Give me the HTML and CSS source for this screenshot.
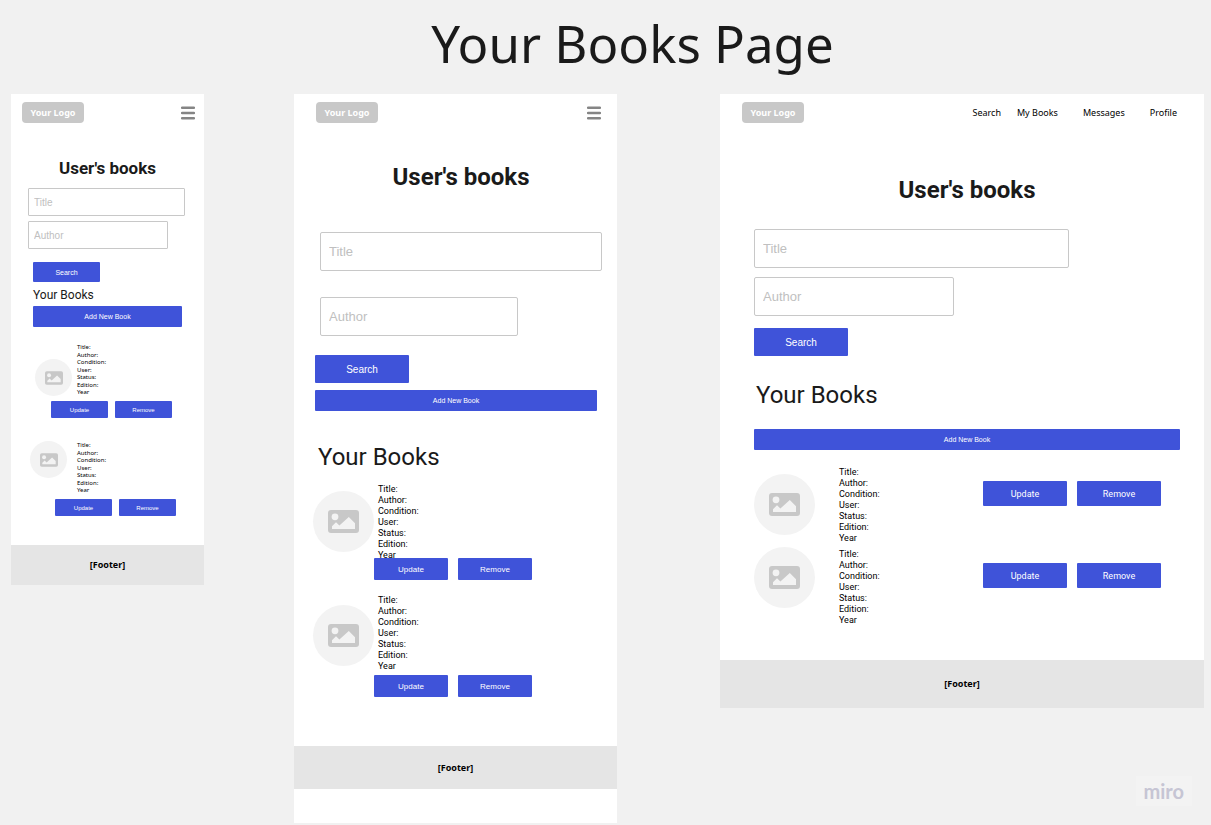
FILE: index.html
```
<!DOCTYPE html>
<html lang="en">
<head>
<meta charset="utf-8">
<meta name="viewport" content="width=device-width, initial-scale=1">
<title>Your Books Page</title>
<link rel="stylesheet" href="styles.css">
</head>
<body>
<svg class="sprite" aria-hidden="true">
  <symbol id="picture" viewBox="0 0 31 23">
    <rect width="31" height="23" rx="3" fill="#c8c8c8"/>
    <circle cx="7" cy="6.8" r="3.4" fill="#f3f3f3"/>
    <path d="M4 19v-2.800l4-4 3.400 3.400L20.800 7 27 13.200V19z" fill="#f3f3f3"/>
  </symbol>
  <symbol id="menu" viewBox="0 0 14 14">
    <path d="M1 1.700h12M1 7h12M1 12.300h12" stroke="#858585" stroke-width="2.400" stroke-linecap="round"/>
  </symbol>
</svg>

<h1 class="page-title">Your Books Page</h1>

<main class="board">
  <section class="frame frame-phone" aria-label="Phone">
    <header class="topbar">
      <a class="logo" href="#">Your Logo</a>
      <button class="menu" type="button" aria-label="Menu"><svg><use href="#menu"/></svg></button>
    </header>
    <div class="content">
      <h2 class="heading">User's books</h2>
      <form class="search">
        <input class="field field-title" type="text" placeholder="Title" aria-label="Title">
        <input class="field field-author" type="text" placeholder="Author" aria-label="Author">
        <button class="btn btn-search" type="button">Search</button>
      </form>
      <div class="library">
        <h3 class="subheading">Your Books</h3>
        <button class="btn btn-add" type="button">Add New Book</button>
        <article class="book book-first">
          <div class="cover"><svg><use href="#picture"/></svg></div>
          <ul class="details"><li>Title:</li><li>Author:</li><li>Condition:</li><li>User:</li><li>Status:</li><li>Edition:</li><li>Year</li></ul>
          <div class="actions"><button class="btn" type="button">Update</button><button class="btn" type="button">Remove</button></div>
        </article>
        <article class="book book-second">
          <div class="cover"><svg><use href="#picture"/></svg></div>
          <ul class="details"><li>Title:</li><li>Author:</li><li>Condition:</li><li>User:</li><li>Status:</li><li>Edition:</li><li>Year</li></ul>
          <div class="actions"><button class="btn" type="button">Update</button><button class="btn" type="button">Remove</button></div>
        </article>
      </div>
    </div>
    <footer class="footer">[Footer]</footer>
  </section>

  <section class="frame frame-tablet" aria-label="Tablet">
    <header class="topbar">
      <a class="logo" href="#">Your Logo</a>
      <button class="menu" type="button" aria-label="Menu"><svg><use href="#menu"/></svg></button>
    </header>
    <div class="content">
      <h2 class="heading">User's books</h2>
      <form class="search">
        <input class="field field-title" type="text" placeholder="Title" aria-label="Title">
        <input class="field field-author" type="text" placeholder="Author" aria-label="Author">
        <button class="btn btn-search" type="button">Search</button>
      </form>
      <div class="library">
        <button class="btn btn-add" type="button">Add New Book</button>
        <h3 class="subheading">Your Books</h3>
        <article class="book book-first">
          <div class="cover"><svg><use href="#picture"/></svg></div>
          <ul class="details"><li>Title:</li><li>Author:</li><li>Condition:</li><li>User:</li><li>Status:</li><li>Edition:</li><li>Year</li></ul>
          <div class="actions"><button class="btn" type="button">Update</button><button class="btn" type="button">Remove</button></div>
        </article>
        <article class="book book-second">
          <div class="cover"><svg><use href="#picture"/></svg></div>
          <ul class="details"><li>Title:</li><li>Author:</li><li>Condition:</li><li>User:</li><li>Status:</li><li>Edition:</li><li>Year</li></ul>
          <div class="actions"><button class="btn" type="button">Update</button><button class="btn" type="button">Remove</button></div>
        </article>
      </div>
    </div>
    <footer class="footer">[Footer]</footer>
  </section>

  <section class="frame frame-desktop" aria-label="Desktop">
    <header class="topbar">
      <a class="logo" href="#">Your Logo</a>
      <nav class="nav">
        <a href="#">Search</a>
        <a href="#">My Books</a>
        <a class="nav-wide" href="#">Messages</a>
        <a class="nav-wide" href="#">Profile</a>
      </nav>
    </header>
    <div class="content">
      <h2 class="heading">User's books</h2>
      <form class="search">
        <input class="field field-title" type="text" placeholder="Title" aria-label="Title">
        <input class="field field-author" type="text" placeholder="Author" aria-label="Author">
        <button class="btn btn-search" type="button">Search</button>
      </form>
      <div class="library">
        <h3 class="subheading">Your Books</h3>
        <button class="btn btn-add" type="button">Add New Book</button>
        <article class="book book-first">
          <div class="cover"><svg><use href="#picture"/></svg></div>
          <ul class="details"><li>Title:</li><li>Author:</li><li>Condition:</li><li>User:</li><li>Status:</li><li>Edition:</li><li>Year</li></ul>
          <div class="actions"><button class="btn" type="button">Update</button><button class="btn" type="button">Remove</button></div>
        </article>
        <article class="book book-second">
          <div class="cover"><svg><use href="#picture"/></svg></div>
          <ul class="details"><li>Title:</li><li>Author:</li><li>Condition:</li><li>User:</li><li>Status:</li><li>Edition:</li><li>Year</li></ul>
          <div class="actions"><button class="btn" type="button">Update</button><button class="btn" type="button">Remove</button></div>
        </article>
      </div>
    </div>
    <footer class="footer">[Footer]</footer>
  </section>
</main>

<div class="brand">miro</div>
</body>
</html>
```

FILE: styles.css
```
* { box-sizing: border-box; }

body {
  margin: 0;
  position: relative;
  min-height: 100vh;
  background: #f1f1f1;
  color: #1a1a1a;
  font-family: Roboto, "Liberation Sans", sans-serif;
}

h1, h2, h3, ul { margin: 0; padding: 0; font-weight: 400; }
ul { list-style: none; }
a { color: inherit; text-decoration: none; }

.sprite { position: absolute; width: 0; height: 0; }

.page-title {
  padding: 7px 0 15px 54px;
  font: 400 51px/72px "Noto Sans", sans-serif;
  text-align: center;
}

.board {
  display: grid;
  grid-template-columns: 193fr 90px 323fr 103px 484fr;
  align-items: start;
  padding: 0 7px 2px 11px;
}

.frame { background: #fff; }
.frame-phone { grid-column: 1; }
.frame-tablet { grid-column: 3; padding-bottom: 34px; }
.frame-desktop { grid-column: 5; }

/* Top bar */
.topbar {
  display: flex;
  align-items: center;
  justify-content: space-between;
  padding: 8px 16px 8px 22px;
}
.frame-phone .topbar { padding: 8px 9px 8px 11px; }
.frame-desktop .topbar { padding-right: 27px; }

.logo {
  width: 62px;
  border-radius: 4px;
  background: #c8c8c8;
  color: #fff;
  font: 700 9px/21px "Noto Sans", sans-serif;
  text-align: center;
}
.menu { padding: 0; border: 0; background: none; }
.menu svg { display: block; width: 14px; height: 14px; }

.nav { display: flex; gap: 16px; color: #000; font: 400 9px/20px "Noto Sans", sans-serif; }
.nav-wide { margin-left: 9px; }

/* Controls */
.heading { font-size: 24px; line-height: 28px; font-weight: 700; text-align: center; }
.subheading { font-size: 24px; line-height: 28px; }

.search { display: flex; flex-direction: column; align-items: flex-start; }
.field {
  height: 39px;
  padding: 0 8px;
  border: 1px solid #c8c8c8;
  border-radius: 2px;
  outline: 0;
  background: #fff;
  color: #1a1a1a;
  font: 400 13px/16px "Liberation Sans", sans-serif;
}
.field::placeholder { color: #c0c0c0; opacity: 1; }

.btn {
  padding: 0;
  border: 0;
  border-radius: 1px;
  background: #3f53d9;
  color: #fff;
  font-family: "Liberation Sans", sans-serif;
}
.btn-search { width: 94px; height: 28px; font-size: 10px; }
.btn-add { height: 21px; font-size: 7px; }

.library { display: flex; flex-direction: column; }

/* Books */
.book { display: grid; align-items: start; }
.cover {
  display: grid;
  place-items: center;
  width: 61px;
  height: 61px;
  border-radius: 50%;
  background: #f3f3f3;
}
.cover svg { display: block; width: 31px; height: 23px; }
.details { color: #000; font-size: 9px; line-height: 11px; }
.actions { display: flex; gap: 10px; }

.footer {
  background: #e5e5e5;
  color: #000;
  font: 700 9px/40px "Noto Sans", sans-serif;
  text-align: center;
}

/* Phone */
.frame-phone .content { padding: 26px 17px 29px; }
.frame-phone .heading { font-size: 17px; line-height: 22px; }
.frame-phone .search { margin-top: 9px; }
.frame-phone .field { height: 28px; padding: 0 5px; border-radius: 1px; font-size: 10px; line-height: 12px; }
.frame-phone .field-title { width: 99%; }
.frame-phone .field-author { width: 88%; margin-top: 5px; }
.frame-phone .btn-search { width: 67px; height: 20px; margin: 13px 0 0 5px; font-size: 7px; }
.frame-phone .library { padding: 6px 5px 0; }
.frame-phone .subheading { font-size: 12px; line-height: 14px; }
.frame-phone .btn-add { margin-top: 4px; }
.frame-phone .book { grid-template-columns: 44px 1fr; }
.frame-phone .book-first { margin-top: 16px; }
.frame-phone .book-second { margin-top: 23px; }
.frame-phone .cover { width: 37px; height: 37px; }
.frame-phone .book-first .cover { margin: 16px 0 0 2px; }
.frame-phone .book-second .cover { margin-left: -3px; }
.frame-phone .cover svg { width: 18px; height: 14px; }
.frame-phone .details {
  display: grid;
  align-content: space-between;
  height: 52px;
  margin-top: 1px;
  font: 400 6px/7px "Noto Sans", sans-serif;
}
.frame-phone .actions { grid-column: 1 / 3; gap: 7px; margin: 5px 0 0 18px; }
.frame-phone .book-second .actions { margin-left: 22px; }
.frame-phone .actions .btn { width: 57px; height: 17px; font-size: 6px; }

/* Tablet */
.frame-tablet .content { padding: 32px 15px 49px 21px; }
.frame-tablet .heading { padding-left: 5px; }
.frame-tablet .search { margin-top: 41px; }
.frame-tablet .field { margin-left: 5px; }
.frame-tablet .field-title { align-self: stretch; }
.frame-tablet .field-author { width: 69%; margin-top: 26px; }
.frame-tablet .btn-search { margin-top: 19px; }
.frame-tablet .btn-add { margin: 7px 5px 0 0; }
.frame-tablet .subheading { margin-top: 32px; padding-left: 3px; }
.frame-tablet .book { grid-template-columns: 63px 1fr; }
.frame-tablet .book-first { margin-top: 13px; }
.frame-tablet .book-second { margin-top: 15px; }
.frame-tablet .cover { margin: 7px 0 0 -2px; }
.frame-tablet .book-second .cover { margin-top: 10px; }
.frame-tablet .actions { grid-column: 1 / 3; margin: -3px 0 0 59px; }
.frame-tablet .book-second .actions { margin-top: 3px; }
.frame-tablet .actions .btn { width: 74px; height: 22px; font-size: 8px; }
.frame-tablet .footer { line-height: 43px; }

/* Desktop */
.frame-desktop .content { padding: 45px 24px 34px 34px; }
.frame-desktop .search { margin-top: 25px; }
.frame-desktop .field-title { width: 74%; }
.frame-desktop .field-author { width: 47%; margin-top: 9px; }
.frame-desktop .btn-search { margin-top: 12px; }
.frame-desktop .subheading { margin-top: 25px; padding-left: 2px; }
.frame-desktop .btn-add { margin-top: 20px; }
.frame-desktop .book { grid-template-columns: 85px 1fr auto; padding-right: 19px; }
.frame-desktop .book-first { margin-top: 17px; }
.frame-desktop .book-second { margin-top: 3px; }
.frame-desktop .book-first .cover { margin-top: 7px; }
.frame-desktop .book-second .details { margin-top: 2px; }
.frame-desktop .actions { margin-top: 14px; }
.frame-desktop .book-second .actions { margin-top: 16px; }
.frame-desktop .actions .btn { width: 84px; height: 25px; font: 400 9px/12px Roboto, sans-serif; }
.frame-desktop .footer { line-height: 48px; }

/* Watermark over the board */
.brand {
  position: absolute;
  right: 19px;
  bottom: 19px;
  padding: 0 8px;
  background: #f3f3f3;
  color: #c6c5d4;
  font: 700 20px/30px Lato, sans-serif;
}
```
